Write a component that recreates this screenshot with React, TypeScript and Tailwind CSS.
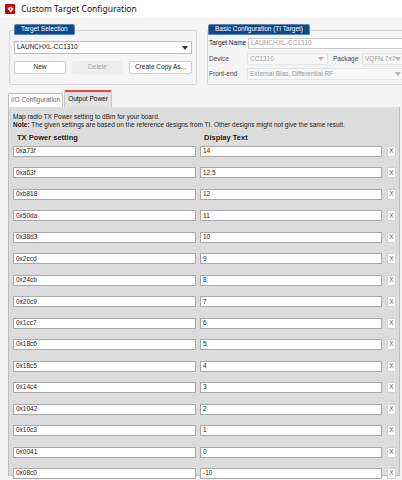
import React from "react";

const rows: [string, string][] = [
  ["0xa73f", "14"],
  ["0xa63f", "12.5"],
  ["0xb818", "12"],
  ["0x50da", "11"],
  ["0x38d3", "10"],
  ["0x2ccd", "9"],
  ["0x24cb", "8"],
  ["0x20c9", "7"],
  ["0x1cc7", "6"],
  ["0x18c6", "5"],
  ["0x18c5", "4"],
  ["0x14c4", "3"],
  ["0x1042", "2"],
  ["0x10c3", "1"],
  ["0x0041", "0"],
  ["0x08c0", "-10"],
];

const Caret = ({ light }: { light?: boolean }) => (
  <svg width="6" height="4" viewBox="0 0 6 4" className="shrink-0">
    <path d="M0 0 L6 0 L3 4 Z" fill={light ? "#b5b5b5" : "#333"} />
  </svg>
);

const GroupTab = ({ children }: { children: React.ReactNode }) => (
  <div className="relative z-10 -mb-[5px] ml-[5px] flex h-[11px] w-fit items-center rounded-t-[2px] border border-[#5f86b3] bg-[#0d4a87] px-[6px] text-[6.5px] leading-none whitespace-nowrap text-white">
    {children}
  </div>
);

const Btn = ({ children, disabled }: { children: React.ReactNode; disabled?: boolean }) => (
  <div
    className={`flex h-[13px] items-center justify-center rounded-[2px] border text-[6.5px] leading-none whitespace-nowrap ${
      disabled
        ? "border-[#ececec] bg-[#eeeeee] text-[#a6a6a6]"
        : "border-[#cfcfcf] bg-white text-[#222]"
    }`}
  >
    {children}
  </div>
);

const DisabledSelect = ({ value, className }: { value: string; className: string }) => (
  <div
    className={`flex h-[12px] items-center justify-between overflow-hidden border border-[#e3e3e3] bg-[#f7f7f7] pl-[2px] pr-[3px] text-[6.5px] leading-none whitespace-nowrap text-[#9a9a9a] ${className}`}
  >
    <span>{value}</span>
    <Caret light />
  </div>
);

export default function App() {
  return (
    <div
      className="flex h-[480px] w-[402px] flex-col overflow-hidden bg-[#f4f4f4] text-[#222]"
      style={{ fontFamily: '"Liberation Sans", Arial, sans-serif' }}
    >
      {/* title bar */}
      <div className="flex h-[18px] shrink-0 items-center gap-[6px] bg-white pl-[5px]">
        <div className="flex h-[10px] w-[10px] items-center justify-center rounded-[1px] bg-[#cc0000]">
          <svg width="7" height="7" viewBox="0 0 10 10">
            <path
              d="M1 2 L4 2 L4 1 L7 1 L7 3 L9 3 L9 5 L7 7 L6 9 L4 9 L4 7 L2 5 L1 4 Z"
              fill="white"
            />
            <path d="M5 3 L5 6" stroke="#cc0000" strokeWidth="1" />
          </svg>
        </div>
        <span
          className="text-[8.5px] leading-none text-[#111]"
          style={{ fontFamily: '"Noto Sans", "Open Sans", sans-serif' }}
        >
          Custom Target Configuration
        </span>
      </div>

      {/* configuration group boxes */}
      <div className="flex shrink-0 pt-[6px]">
        <div className="ml-[9px] w-[188px]">
          <GroupTab>Target Selection</GroupTab>
          <div className="h-[55px] rounded-[2px] border border-[#d6d6d6] px-[4px] pt-[10px]">
            <div className="flex h-[13px] items-center justify-between border border-[#bdbdbd] bg-white pl-[2px] pr-[3px] text-[6.5px] leading-none">
              <span>LAUNCHXL-CC1310</span>
              <Caret />
            </div>
            <div className="mt-[7px] grid grid-cols-[52px_51px_63px] gap-[6px]">
              <Btn>New</Btn>
              <Btn disabled>Delete</Btn>
              <Btn>Create Copy As...</Btn>
            </div>
          </div>
        </div>

        <div className="ml-[10px] min-w-0 flex-1">
          <div className="ml-[-4px]">
            <GroupTab>Basic Configuration (TI Target)</GroupTab>
          </div>
          <div className="-mr-[4px] h-[55px] rounded-[2px] border border-[#d6d6d6] pl-[1px] pt-[7px] text-[6.5px] leading-none whitespace-nowrap">
            <div className="flex h-[11px] items-center">
              <span className="w-[39px] shrink-0">Target Name</span>
              <div className="flex h-[11px] flex-1 items-center border border-[#c9c9c9] bg-white pl-[2px] text-[#a0a0a0]">
                LAUNCHXL-CC1310
              </div>
            </div>
            <div className="mt-[4px] flex h-[12px] items-center">
              <span className="w-[38px] shrink-0 text-[#444]">Device</span>
              <DisabledSelect value="CC1310" className="w-[81px] shrink-0" />
              <span className="ml-[5px] w-[29px] shrink-0 text-[#444]">Package</span>
              <DisabledSelect value="VQFN 7x7" className="min-w-0 flex-1" />
            </div>
            <div className="mt-[3px] flex h-[12px] items-center">
              <span className="w-[38px] shrink-0 text-[#444]">Front-end</span>
              <DisabledSelect value="External Bias, Differential RF" className="flex-1" />
            </div>
          </div>
        </div>
      </div>

      {/* tabs */}
      <div className="mt-[5px] flex h-[17px] shrink-0 items-end pl-[8px]">
        <div className="flex h-[14px] w-[55px] items-center justify-center rounded-t-[2px] border border-b-0 border-[#bdbdbd] bg-white text-[6.5px] leading-none text-[#666]">
          I/O Configuration
        </div>
        <div className="ml-[1px] flex h-[17px] w-[48px] items-center justify-center rounded-t-[2px] border border-b-0 border-t-2 border-[#c8c8c8] border-t-[#e8453c] bg-[#e2e2e2] text-[6.5px] leading-none text-[#111]">
          Output Power
        </div>
      </div>

      {/* panel */}
      <div className="ml-[8px] mr-[2px] h-[369px] shrink-0 border-b border-l border-r border-[#bcbcbc] bg-[#dcdcdc] pl-[4px] pt-[6px] text-[6.5px] leading-[8px]">
        <div>Map radio TX Power setting to dBm for your board.</div>
        <div>
          <span className="font-bold">Note:</span> The given settings are based on the reference designs
          from TI. Other designs might not give the same result.
        </div>
        <div className="mt-[4px] flex h-[10px] items-center text-[7.5px] font-bold leading-none">
          <span className="ml-[4px] w-[187px]">TX Power setting</span>
          <span>Display Text</span>
        </div>
        <div className="mt-[3px] flex flex-col gap-[10.47px]">
          {rows.map(([hex, text]) => (
            <div key={hex} className="flex h-[11px] items-center">
              <div className="flex h-[11px] w-[183px] items-center border border-[#a9a9a9] bg-white pl-[2px] leading-none">
                {hex}
              </div>
              <div className="ml-[4px] flex h-[11px] w-[182px] items-center border border-[#a9a9a9] bg-white pl-[2px] leading-none">
                {text}
              </div>
              <div className="ml-[5px] flex h-[11px] w-[9px] items-center justify-center rounded-[1px] border border-[#d0d0d0] bg-white text-[6.5px] leading-none text-[#555]">
                X
              </div>
            </div>
          ))}
        </div>
      </div>
    </div>
  );
}
